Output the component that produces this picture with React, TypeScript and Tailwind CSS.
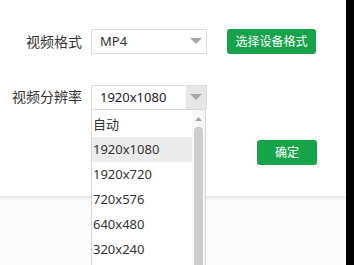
import React from "react";

const items = ["自动", "1920x1080", "1920x720", "720x576", "640x480", "320x240"];

function Arrow() {
  return (
    <svg width="12" height="7" viewBox="0 0 12 7">
      <path d="M0 0 L12 0 L6 6 Z" fill="#a6a6a6" />
    </svg>
  );
}

export default function App() {
  const font = { fontFamily: '"Noto Sans", "Noto Sans CJK SC", sans-serif' };
  return (
    <div className="relative flex h-[265px] w-[354px] overflow-hidden bg-black" style={font}>
      <div className="flex h-full w-[346px] flex-col bg-[#fcfcfc]">
        <div className="h-[196px] w-full bg-white shadow-[0_2px_4px_rgba(0,0,0,0.12)]">
          <div className="flex flex-col pt-[29px]">
            <div className="flex h-[25px] items-center">
              <div className="w-[82px] text-right text-[14px] leading-none text-[#333]">视频格式</div>
              <div className="ml-[9px] flex h-[25px] w-[116px] items-center justify-between border border-[#dcdcdc] pl-[8px] pr-[4px] text-[13px] text-[#333]">
                <span>MP4</span>
                <Arrow />
              </div>
              <div className="ml-[20px] flex h-[25px] w-[89px] items-center justify-center rounded-[3px] bg-[#17a34a] text-[12px] text-white">
                选择设备格式
              </div>
            </div>
            <div className="mt-[31px] flex h-[24px] items-center">
              <div className="w-[82px] text-right text-[14px] leading-none text-[#333]">视频分辨率</div>
              <div className="ml-[9px] flex h-[24px] w-[116px] items-center justify-between border border-[#dcdcdc] border-b-0 pl-[8px] text-[13px] text-[#222]">
                <span>1920x1080</span>
                <div className="flex h-full w-[20px] items-center justify-center bg-[#e6e6e6]">
                  <Arrow />
                </div>
              </div>
            </div>
            <div className="mt-[31px] flex justify-end pr-[29px]">
              <div className="flex h-[25px] w-[60px] items-center justify-center rounded-[3px] bg-[#17a34a] text-[12px] text-white">
                确定
              </div>
            </div>
          </div>
        </div>
      </div>
      <div className="absolute left-[91px] top-[109px] flex h-[160px] w-[115px] border-l border-t border-r border-[#d6d6d6] bg-white">
        <div className="flex flex-1 flex-col pt-[2px]">
          {items.map((t, i) => (
            <div
              key={t}
              className={`flex h-[25px] items-center pl-[1px] text-[13px] text-[#333] ${i === 1 ? "bg-[#ebebeb]" : ""}`}
            >
              {t}
            </div>
          ))}
        </div>
        <div className="flex w-[13px] flex-col items-center bg-[#f7f7f7] pt-[7px]">
          <svg width="7" height="4" viewBox="0 0 7 4">
            <path d="M0 4 L3.5 0 L7 4 Z" fill="#a3a3a3" />
          </svg>
          <div className="mt-[6px] w-[9px] flex-1 rounded-t-[4px] bg-[#cdcdcd]" />
        </div>
      </div>
    </div>
  );
}
